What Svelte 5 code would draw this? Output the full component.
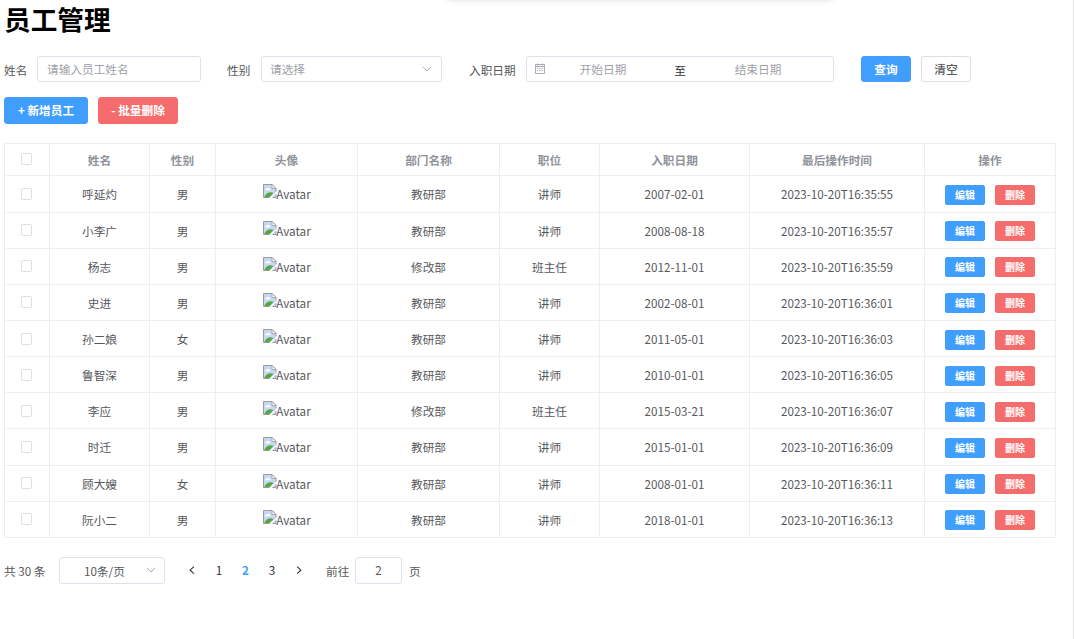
<script lang="ts">
  interface Employee {
    id: number;
    name: string;
    gender: string;
    dept: string;
    job: string;
    entryDate: string;
    updateTime: string;
  }

  const columns = ['姓名', '性别', '头像', '部门名称', '职位', '入职日期', '最后操作时间', '操作'];

  const employees: Employee[] = [
    { id: 1, name: '呼延灼', gender: '男', dept: '教研部', job: '讲师', entryDate: '2007-02-01', updateTime: '2023-10-20T16:35:55' },
    { id: 2, name: '小李广', gender: '男', dept: '教研部', job: '讲师', entryDate: '2008-08-18', updateTime: '2023-10-20T16:35:57' },
    { id: 3, name: '杨志', gender: '男', dept: '修改部', job: '班主任', entryDate: '2012-11-01', updateTime: '2023-10-20T16:35:59' },
    { id: 4, name: '史进', gender: '男', dept: '教研部', job: '讲师', entryDate: '2002-08-01', updateTime: '2023-10-20T16:36:01' },
    { id: 5, name: '孙二娘', gender: '女', dept: '教研部', job: '讲师', entryDate: '2011-05-01', updateTime: '2023-10-20T16:36:03' },
    { id: 6, name: '鲁智深', gender: '男', dept: '教研部', job: '讲师', entryDate: '2010-01-01', updateTime: '2023-10-20T16:36:05' },
    { id: 7, name: '李应', gender: '男', dept: '修改部', job: '班主任', entryDate: '2015-03-21', updateTime: '2023-10-20T16:36:07' },
    { id: 8, name: '时迁', gender: '男', dept: '教研部', job: '讲师', entryDate: '2015-01-01', updateTime: '2023-10-20T16:36:09' },
    { id: 9, name: '顾大嫂', gender: '女', dept: '教研部', job: '讲师', entryDate: '2008-01-01', updateTime: '2023-10-20T16:36:11' },
    { id: 10, name: '阮小二', gender: '男', dept: '教研部', job: '讲师', entryDate: '2018-01-01', updateTime: '2023-10-20T16:36:13' },
  ];

  const pages = [1, 2, 3];
  let currentPage = $state(2);
  let selected: number[] = $state([]);

  function toggle(id: number) {
    selected = selected.includes(id) ? selected.filter((s) => s !== id) : [...selected, id];
  }

  function toggleAll() {
    selected = selected.length === employees.length ? [] : employees.map((e) => e.id);
  }
</script>

{#snippet arrowDown()}
  <svg class="arrow" viewBox="0 0 10 10" width="10" height="10">
    <path d="M0.8 2.8 L5 7 L9.2 2.8" fill="none" stroke="#a8abb2" />
  </svg>
{/snippet}

<div class="page">
  <div class="top-shadow"></div>
  <h1>员工管理</h1>

  <form class="search" onsubmit={(e) => e.preventDefault()}>
    <label for="name">姓名</label>
    <input id="name" class="field name" placeholder="请输入员工姓名" />

    <span class="label gender-label">性别</span>
    <div class="field select">
      <span>请选择</span>
      {@render arrowDown()}
    </div>

    <span class="label date-label">入职日期</span>
    <div class="field range">
      <svg viewBox="0 0 12 12" width="12" height="12" fill="none" stroke="#a8abb2">
        <path d="M1.5 1.5H10.5V10.5H1.5Z M1.5 3.5H10.5" />
        <path d="M3.5 0.5V2.5 M8.5 0.5V2.5" />
        <path d="M3 5.5H9.5 M3 7.5H9.5" stroke-dasharray="1.2 1" />
      </svg>
      <input placeholder="开始日期" aria-label="开始日期" />
      <span class="to">至</span>
      <input placeholder="结束日期" aria-label="结束日期" />
    </div>

    <button class="btn primary query" type="submit">查询</button>
    <button class="btn" type="reset">清空</button>
  </form>

  <div class="actions">
    <button class="btn primary">+ 新增员工</button>
    <button class="btn danger">- 批量删除</button>
  </div>

  <table>
    <thead>
      <tr>
        <th>
          <button class="checkbox" class:checked={selected.length === employees.length} aria-label="全选" onclick={toggleAll}></button>
        </th>
        {#each columns as column}
          <th>{column}</th>
        {/each}
      </tr>
    </thead>
    <tbody>
      {#each employees as employee (employee.id)}
        <tr>
          <td>
            <button class="checkbox" class:checked={selected.includes(employee.id)} aria-label={employee.name} onclick={() => toggle(employee.id)}></button>
          </td>
          <td>{employee.name}</td>
          <td>{employee.gender}</td>
          <td>
            <span class="avatar">
              <svg viewBox="0 0 14 14" width="14" height="14">
                <path d="M0.5 0.5H9L13 4.5V13.5H0.5Z" fill="#c6d8f5" />
                <path d="M2 6.2Q2.2 4.5 3.8 4.6Q4.8 2.8 6.2 4.4Q7.8 4.6 7.4 6.2Z" fill="#fff" />
                <path d="M1 13.5Q3 8.5 7 8.2Q10 8.3 10.5 9L6 13.5Z" fill="#57a83c" />
                <path d="M6.6 14L13.5 7.5V9L8.5 14Z" fill="#fff" />
                <path d="M6.5 13.5H0.5V0.5H9L13 4.5V7.5 M9.5 13.5H13V10.5" fill="none" stroke="#9a9a9a" />
                <path d="M9 0.5V4.5H13Z" fill="#fff" stroke="#9a9a9a" stroke-width="0.8" />
              </svg>Avatar</span>
          </td>
          <td>{employee.dept}</td>
          <td>{employee.job}</td>
          <td>{employee.entryDate}</td>
          <td>{employee.updateTime}</td>
          <td class="ops">
            <button class="btn mini primary">编辑</button>
            <button class="btn mini danger">删除</button>
          </td>
        </tr>
      {/each}
    </tbody>
  </table>

  <div class="pagination">
    <span class="total">共 30 条</span>
    <div class="field sizes">
      <span>10条/页</span>
      {@render arrowDown()}
    </div>
    <div class="pager">
      <button aria-label="上一页" onclick={() => (currentPage = Math.max(1, currentPage - 1))}>
        <svg viewBox="0 0 10 10" width="10" height="10"><path d="M6.9 1.7L3.1 5.2L6.9 8.7" fill="none" stroke="#303133" stroke-width="1.1" /></svg>
      </button>
      {#each pages as page}
        <button class:active={page === currentPage} onclick={() => (currentPage = page)}>{page}</button>
      {/each}
      <button aria-label="下一页" onclick={() => (currentPage = Math.min(3, currentPage + 1))}>
        <svg viewBox="0 0 10 10" width="10" height="10"><path d="M3.1 1.7L6.9 5.2L3.1 8.7" fill="none" stroke="#303133" stroke-width="1.1" /></svg>
      </button>
    </div>
    <span class="jump">前往</span>
    <input class="field goto" value={currentPage} aria-label="页码" />
    <span>页</span>
  </div>
</div>

<style>
  :global(body) {
    background: #fff;
  }
  .page {
    position: relative;
    box-sizing: border-box;
    width: 1074px;
    height: 639px;
    padding-left: 4px;
    border-right: 1px solid #e6e6e6;
    font-family: "Noto Sans CJK SC", sans-serif;
    font-size: 11.67px;
    color: #56585c;
  }
  .top-shadow {
    position: absolute;
    top: -20px;
    left: 447px;
    width: 385px;
    height: 18px;
    box-shadow: 0 0 7px rgba(0, 0, 0, 0.25);
  }
  h1 {
    margin: 0;
    height: 56px;
    line-height: 37px;
    font-size: 26.67px;
    color: #000;
  }
  button,
  input {
    box-sizing: border-box;
    margin: 0;
    padding: 0;
    font: inherit;
    color: inherit;
  }
  input {
    outline: none;
  }
  input::placeholder {
    color: #a0a2a8;
    opacity: 1;
  }
  .field {
    box-sizing: border-box;
    height: 26px;
    border: 1px solid #dfe2ea;
    border-radius: 3px;
    background: #fff;
    font-size: 11.67px;
  }
  .search {
    display: flex;
    align-items: center;
    height: 26px;
    white-space: nowrap;
  }
  label,
  .label {
    width: 33px;
  }
  .name {
    width: 164px;
    padding: 0 9px 2px;
  }
  .gender-label {
    width: 34px;
    margin-left: 26px;
  }
  .select {
    display: flex;
    justify-content: space-between;
    align-items: center;
    width: 181px;
    padding: 0 9px 0 8px;
    color: #a0a2a8;
  }
  .select span {
    padding-bottom: 2px;
  }
  .date-label {
    width: 57px;
    margin-left: 27px;
  }
  .range {
    display: flex;
    align-items: center;
    width: 308px;
    padding: 0 7px;
  }
  .range input {
    width: 114px;
    padding-bottom: 2px;
    border: none;
    text-align: center;
  }
  .to {
    width: 41px;
    padding-right: 1px;
    box-sizing: border-box;
    text-align: center;
    color: #303133;
  }
  .btn {
    height: 26px;
    padding: 0 12px;
    border: 1px solid #dcdfe6;
    border-radius: 3px;
    background: #fff;
    font-weight: 500;
    line-height: 24px;
    white-space: nowrap;
    cursor: pointer;
  }
  .primary {
    border-color: #409eff;
    background: #409eff;
    color: #fff;
    font-weight: 700;
  }
  .danger {
    border-color: #f56c6c;
    background: #f56c6c;
    color: #fff;
    font-weight: 700;
  }
  .search .btn {
    width: 50px;
    margin-left: 10px;
  }
  .search .query {
    margin-left: 27px;
  }
  .actions {
    display: flex;
    gap: 10px;
    margin: 15px 0 19px;
  }
  .actions .btn {
    width: 80px;
    height: 27px;
    padding: 0 0 1px;
  }
  .actions .primary {
    width: 84px;
  }
  table {
    display: block;
    box-sizing: border-box;
    width: 1052px;
    border: solid #ebeef5;
    border-width: 1px 0 0 1px;
  }
  thead,
  tbody {
    display: block;
  }
  tr {
    display: grid;
    grid-template-columns: 45px 100px 66px 142px 142px 100px 150px 175px 131px;
    height: 36.15px;
  }
  thead tr {
    height: 32.4px;
  }
  th,
  td {
    display: flex;
    align-items: center;
    justify-content: center;
    padding: 0;
    border: solid #ebeef5;
    border-width: 0 1px 1px 0;
  }
  th {
    color: #909399;
  }
  .checkbox {
    width: 11px;
    height: 12px;
    margin-right: 1px;
    border: 1px solid #dcdfe6;
    border-radius: 1.5px;
    background: #fff;
  }
  th .checkbox {
    margin-top: -1px;
  }
  .checkbox.checked {
    border-color: #409eff;
    background: #409eff;
  }
  .avatar {
    display: flex;
    align-items: center;
  }
  .avatar svg {
    margin: -5px -1px 0 1px;
  }
  td.ops {
    gap: 10px;
    padding-top: 2px;
  }
  .mini {
    width: 40px;
    height: 20px;
    padding: 0;
    font-size: 10px;
    line-height: 18px;
    border-radius: 2px;
  }
  .pagination {
    display: flex;
    align-items: center;
    height: 27px;
    margin-top: 19px;
    white-space: nowrap;
  }
  .total {
    width: 55px;
  }
  .sizes {
    display: flex;
    align-items: center;
    justify-content: space-between;
    width: 106px;
    height: 27px;
    padding: 0 8px 0 24px;
  }
  .pager {
    display: flex;
    margin-left: 14px;
  }
  .pager button {
    display: flex;
    align-items: center;
    justify-content: center;
    width: 26.6px;
    height: 24px;
    padding-bottom: 1px;
    border: none;
    background: none;
    color: #303133;
    cursor: pointer;
  }
  .pager .active {
    color: #409eff;
    font-weight: 700;
  }
  .jump {
    width: 29px;
    margin-left: 14px;
  }
  .goto {
    width: 47px;
    height: 27px;
    padding-bottom: 1px;
    margin-right: 7px;
    text-align: center;
  }
</style>
